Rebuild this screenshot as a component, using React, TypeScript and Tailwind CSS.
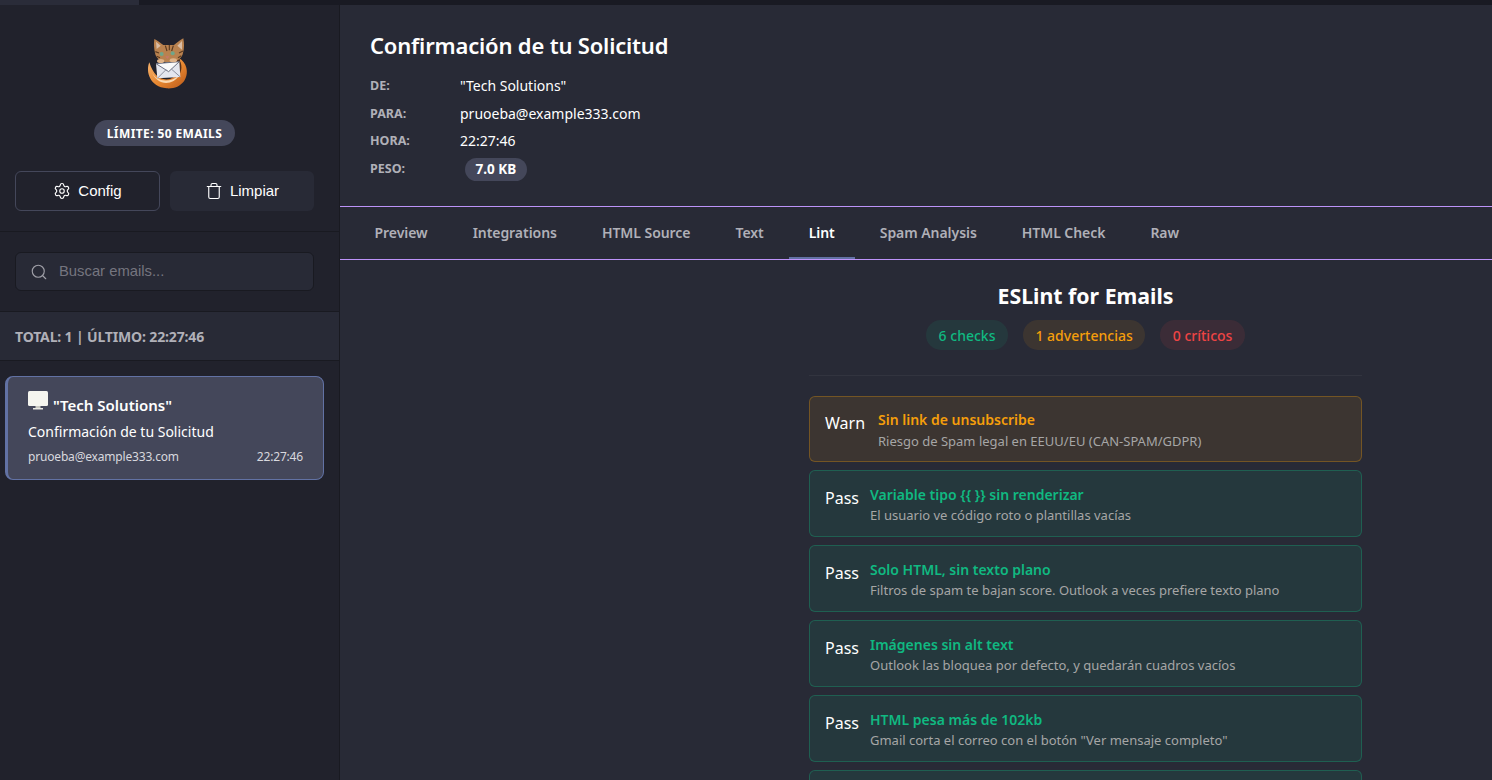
import { Settings, Trash, Search } from 'lucide-react';

const tabs = ['Preview', 'Integrations', 'HTML Source', 'Text', 'Lint', 'Spam Analysis', 'HTML Check', 'Raw'];

const checks = [
  { title: 'Variable tipo {{ }} sin renderizar', desc: 'El usuario ve código roto o plantillas vacías' },
  { title: 'Solo HTML, sin texto plano', desc: 'Filtros de spam te bajan score. Outlook a veces prefiere texto plano' },
  { title: 'Imágenes sin alt text', desc: 'Outlook las bloquea por defecto, y quedarán cuadros vacíos' },
  { title: 'HTML pesa más de 102kb', desc: 'Gmail corta el correo con el botón "Ver mensaje completo"' },
];

function Logo() {
  return (
    <svg viewBox="0 0 270 225" className="w-[90px] h-[75px] mx-auto block">
      <defs>
        <linearGradient id="tail" x1="0" y1="0" x2="1" y2="1">
          <stop offset="0" stopColor="#f6b673" />
          <stop offset="0.55" stopColor="#e6862f" />
          <stop offset="1" stopColor="#b9591a" />
        </linearGradient>
      </defs>
      <path d="M88 112 C76 140 90 186 140 190 C184 193 207 160 199 128 C196 116 188 106 178 100 C186 130 176 152 150 162 C120 168 100 150 88 112 Z" fill="url(#tail)" />
      <path d="M96 142 C108 170 150 176 178 150 C160 182 112 184 96 142 Z" fill="#fbd9b0" />
      <path d="M174 98 C188 116 188 138 172 156 L160 146 L164 104 Z" fill="#54301a" />
      <path d="M103 42 C112 46 122 54 130 60 L162 60 C170 54 180 46 190 40 C193 56 193 70 189 84 C186 100 170 112 146 112 C122 112 108 100 105 84 C102 70 101 56 103 42 Z" fill="#b9824f" />
      <path d="M108 50 L122 62 L110 72 Z M186 48 L172 62 L186 74 Z" fill="#d8bda6" />
      <path d="M136 62 L141 78 M148 60 L148 76 M160 62 L155 78 M106 80 L117 84 M189 78 L177 84 M110 94 L120 98 M184 92 L174 98" stroke="#5a3a20" strokeWidth="3.5" fill="none" />
      <circle cx="125" cy="87" r="6" fill="#6fa68a" />
      <circle cx="158" cy="85" r="6" fill="#6fa68a" />
      <path d="M136 94 L148 94 L142 102 Z" fill="#c9766a" />
      <path d="M108 116 L178 110 L181 156 L112 160 Z" fill="#e4e6ee" />
      <path d="M108 116 L146 140 L178 110 Z" fill="#fafafa" stroke="#6b6f80" strokeWidth="3" />
      <path d="M112 160 L138 134 M181 156 L154 132" stroke="#8c90a0" strokeWidth="3" fill="none" />
      <ellipse cx="122" cy="108" rx="11" ry="6" fill="#e0b48a" />
      <ellipse cx="160" cy="106" rx="11" ry="6" fill="#e0b48a" />
    </svg>
  );
}

function Monitor() {
  return (
    <svg viewBox="0 0 20 20" className="w-5 h-5 shrink-0">
      <rect x="0" y="0" width="20" height="15" rx="1.5" fill="#f5f5ef" />
      <rect x="7.5" y="15" width="5" height="2.5" fill="#c9c9c2" />
      <rect x="5" y="17" width="10" height="1.5" fill="#e8e8e2" />
    </svg>
  );
}

export default function App() {
  return (
    <div className="h-[780px] w-[1492px] overflow-hidden flex flex-col bg-[#282a36] text-white font-['Noto_Sans',sans-serif]">
      <div className="h-[5px] shrink-0 bg-[#191a23]">
        <div className="h-full w-[139px] bg-[#2a2c39]" />
      </div>
      <div className="flex flex-1 min-h-0">
        <aside className="w-[340px] shrink-0 bg-[#21222c] border-r border-[#191a21] flex flex-col">
          <div className="h-[227px] shrink-0 pt-5 pl-[15px] pr-[25px] border-b border-[#191a21]">
            <Logo />
            <div className="mt-5 flex justify-center">
              <span className="h-[26px] px-[12.5px] pt-[1px] flex items-center rounded-full bg-[#44475a] text-[12px] font-bold tracking-[0.4px] uppercase">
                Límite: 50 emails
              </span>
            </div>
            <div className="mt-[25px] flex gap-[10px] font-['Liberation_Sans',sans-serif] text-[15px]">
              <button className="w-[145px] h-10 flex items-center justify-center gap-[7px] rounded-md border border-[#44475a]">
                <Settings size={18} strokeWidth={1.5} />
                Config
              </button>
              <button className="w-[144px] h-10 flex items-center justify-center gap-[7px] rounded-md bg-[#282a36]">
                <Trash size={18} strokeWidth={1.5} />
                Limpiar
              </button>
            </div>
          </div>
          <div className="h-[79px] shrink-0 pt-5 pl-[15px] pr-[25px]">
            <div className="h-[39px] flex items-center gap-[11px] pl-[14px] rounded-md bg-[#282a36] border border-[#191a21] font-['Liberation_Sans',sans-serif] text-[14.8px] text-[#75757f]">
              <Search size={18} strokeWidth={1.5} className="text-[#a0a0a8]" />
              Buscar emails...
            </div>
          </div>
          <div className="h-[50px] shrink-0 flex items-center pl-[15px] bg-[#282a36] border-y border-[#191a21] text-[14px] tracking-[-0.15px] font-bold text-[#b0b0b8]">
            TOTAL: 1 | ÚLTIMO: 22:27:46
          </div>
          <div className="pt-[15px] pl-[5px]">
            <div className="w-[319px] h-[104px] pt-[14px] pl-[20px] pr-5 rounded-lg bg-[#44475a] border border-[#6272a4] border-l-[3px]">
              <div className="flex items-start gap-[5px] h-[26px] text-[15px] font-semibold">
                <Monitor />
                <span className="pt-[3px]">"Tech Solutions"</span>
              </div>
              <div className="mt-[5px] text-[14px] leading-[20px]">Confirmación de tu Solicitud</div>
              <div className="mt-[6px] flex justify-between text-[12px] tracking-[-0.18px] text-[#d8d8de]">
                <span>pruoeba@example333.com</span>
                <span>22:27:46</span>
              </div>
            </div>
          </div>
        </aside>
        <main className="flex-1 min-w-0">
          <header className="h-[202px] pt-[25px] pl-[30px] border-b border-[#bd93f9]">
            <h1 className="text-[22px] leading-[30px] font-semibold tracking-[-0.18px]">Confirmación de tu Solicitud</h1>
            <div className="mt-[15px] grid grid-cols-[90px_1fr] auto-rows-[27.5px] text-[14px]">
              <span className="mt-[2px] text-[12.5px] font-bold text-[#b0b0b8]">DE:</span>
              <span>"Tech Solutions"</span>
              <span className="mt-[2px] text-[12.5px] font-bold text-[#b0b0b8]">PARA:</span>
              <span>pruoeba@example333.com</span>
              <span className="mt-[2px] text-[12.5px] font-bold text-[#b0b0b8]">HORA:</span>
              <span>22:27:46</span>
              <span className="mt-[2px] text-[12.5px] font-bold text-[#b0b0b8]">PESO:</span>
              <span>
                <span className="ml-[5px] inline-flex items-center h-[23px] px-[10.5px] rounded-full bg-[#44475a] text-[13.5px] font-bold">7.0 KB</span>
              </span>
            </div>
          </header>
          <nav className="h-[53px] pl-[14.5px] flex gap-[5px] border-b border-[#bd93f9]">
            {tabs.map((t) => (
              <div
                key={t}
                className={
                  t === 'Lint'
                    ? 'px-5 h-[52px] flex items-center text-[14px] tracking-[-0.05px] font-semibold border-b-2 border-[#6272a4] text-white'
                    : 'px-5 h-[52px] flex items-center text-[14px] tracking-[-0.05px] font-semibold border-b-2 border-transparent text-[#b0b0b8]'
                }
              >
                {t}
              </div>
            ))}
          </nav>
          <section className="ml-[469px] w-[553px]">
            <h2 className="mt-[21px] text-center text-[21.3px] leading-[30px] font-bold">ESLint for Emails</h2>
            <div className="mt-[9px] flex justify-center gap-[15px] text-[14px] font-medium">
              <span className="h-[30px] px-[13px] flex items-center rounded-full bg-[#10b981]/10 text-[#10b981]">6 checks</span>
              <span className="h-[30px] px-[12px] flex items-center rounded-full bg-[#f59e0b]/10 text-[#f59e0b]">1 advertencias</span>
              <span className="h-[30px] px-[13px] flex items-center rounded-full bg-[#ef4444]/10 text-[#ef4444]">0 críticos</span>
            </div>
            <div className="mt-[25px] border-t border-[#32343f]" />
            <div className="mt-5 flex flex-col gap-2">
              <div className="h-[66.4px] flex rounded-md border border-[#f59e0b]/30 bg-[#f59e0b]/10 pl-[15px] pt-[14px]">
                <span className="w-[53px] mt-[1px] text-[16px] leading-[22px]">Warn</span>
                <div>
                  <div className="text-[14px] leading-[18px] font-semibold text-[#f59e0b]">Sin link de unsubscribe</div>
                  <div className="mt-[2px] text-[13px] leading-[20px] text-[#a6a6a6]">Riesgo de Spam legal en EEUU/EU (CAN-SPAM/GDPR)</div>
                </div>
              </div>
              {checks.map((c) => (
                <div key={c.title} className="h-[67px] flex rounded-md border border-[#10b981]/30 bg-[#10b981]/10 pl-[15px] pt-[15px]">
                  <span className="w-[45px] mt-[1px] text-[16px] leading-[22px]">Pass</span>
                  <div>
                    <div className="text-[14px] leading-[18px] font-semibold text-[#10b981]">{c.title}</div>
                    <div className="mt-[1px] text-[13px] leading-[20px] text-[#a6a6a6]">{c.desc}</div>
                  </div>
                </div>
              ))}
              <div className="h-[67px] rounded-md border border-[#10b981]/30 bg-[#10b981]/10" />
            </div>
          </section>
        </main>
      </div>
    </div>
  );
}
